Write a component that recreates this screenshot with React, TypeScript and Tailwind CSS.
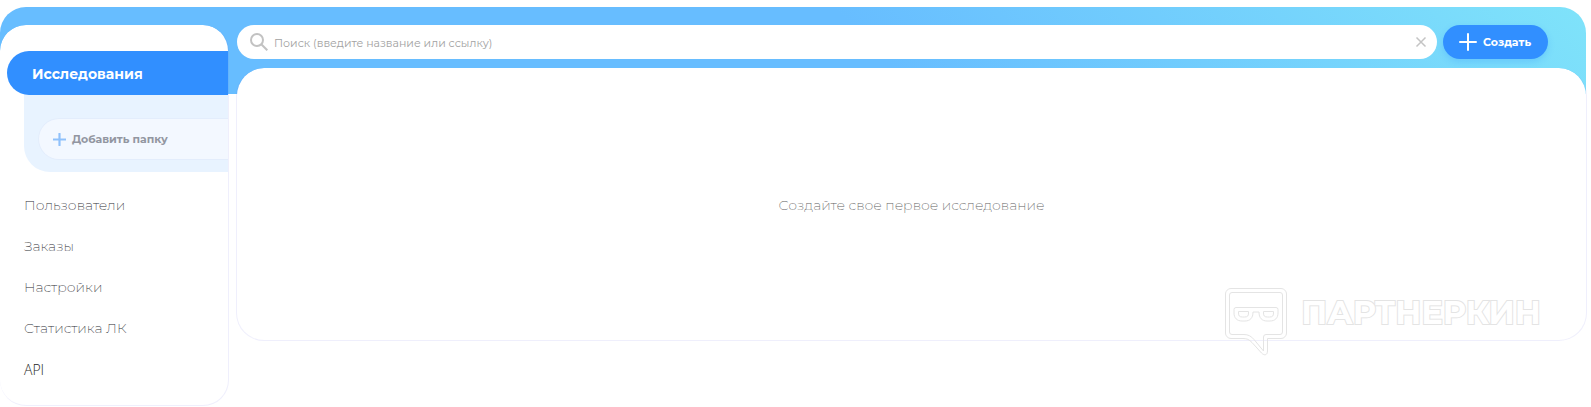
import { useState } from "react";

const NAV_ITEMS = [
  { label: "Пользователи", href: "#users" },
  { label: "Заказы", href: "#orders" },
  { label: "Настройки", href: "#settings" },
  { label: "Статистика ЛК", href: "#stats" },
];

function PlusIcon({ className }: { className?: string }) {
  return (
    <svg viewBox="0 0 18 18" className={className} fill="none" stroke="currentColor" strokeLinecap="round" aria-hidden="true">
      <path d="M9 1v16M1 9h16" />
    </svg>
  );
}

function Sidebar() {
  return (
    <aside className="w-[229px] shrink-0 rounded-[26px] border border-t-0 border-l-0 border-[#6464dc]/10 bg-white bg-clip-padding pt-[26px] pb-4">
      <a
        href="#research"
        className="ml-[7px] flex h-11 items-center rounded-l-[22px] bg-[#318fff] pt-0.5 pl-[25px] text-sm font-bold text-white"
      >
        Исследования
      </a>
      <div className="ml-6 rounded-bl-[26px] bg-[#e8f3ff] pt-[23px] pb-3 pl-3.5">
        <button
          type="button"
          className="flex h-[42px] w-full items-center gap-1.5 rounded-l-[21px] border border-r-0 border-[#e3edfc] bg-[#f3f8ff] pl-3.5 text-[11px] font-bold text-[#9296a1]"
        >
          <PlusIcon className="size-[13px] stroke-[3] text-[#8fc1fb]" />
          Добавить папку
        </button>
      </div>
      <nav className="flex flex-col pt-3 pl-6 text-sm font-extralight text-[#2c2d33]">
        {NAV_ITEMS.map((item) => (
          <a key={item.href} href={item.href} className="flex h-[41px] items-center">
            {item.label}
          </a>
        ))}
        <a href="#api" className="flex h-[41px] items-center pt-0.5 font-['Open_Sans',sans-serif] font-light text-[#1d1d25]">
          API
        </a>
      </nav>
    </aside>
  );
}

function Watermark() {
  return (
    <div className="pointer-events-none absolute right-[45px] -bottom-4 flex items-start gap-3.5">
      <svg width="62" height="68" viewBox="0 0 62 68" fill="none" stroke="#e4e4e4" aria-hidden="true">
        <path d="M6 .5h50a5.500 5.500 0 0 1 5.500 5.500v39a5.500 5.500 0 0 1-5.500 5.500H42.500V63c0 4-3 5-6 2L27 54.500c-3-3-5-4-9-4H6A5.500 5.500 0 0 1 .5 45V6A5.500 5.500 0 0 1 6 .5Z" />
        <path d="M7 4.500h48a2.500 2.500 0 0 1 2.500 2.500v37a2.500 2.500 0 0 1-2.500 2.500H41a2.500 2.500 0 0 0-2.500 2.500v14L29 51.500c-3-3.500-6-5-10-5H7A2.500 2.500 0 0 1 4.500 44V7A2.500 2.500 0 0 1 7 4.500Z" />
        <path d="M11 19.500h40a2 2 0 0 1 2 2V25c0 5-3 8-8 8h-3c-5 0-8-3-8-9h-6c0 6-3 9-8 9h-3c-5 0-8-3-8-8v-3.500a2 2 0 0 1 2-2Z" />
        <path d="M13.500 23.500h10V25c0 3-1 4-4 4h-2c-3 0-4-1-4-4ZM38.500 23.500h10V25c0 3-1 4-4 4h-2c-3 0-4-1-4-4Z" />
      </svg>
      <span className="pt-[9px] text-[32px] leading-8 font-bold text-white [-webkit-text-stroke:2px_#e4e4e4] [paint-order:stroke_fill]">
        ПАРТНЕРКИН
      </span>
    </div>
  );
}

export default function App() {
  const [query, setQuery] = useState("");

  return (
    <div className="grid bg-white pt-[7px] pr-1 font-['Montserrat','Inter',sans-serif]">
      {/* Header backdrop */}
      <div className="mr-px h-[87px] rounded-t-[26px] bg-[linear-gradient(45deg,#67bdff_55%,#7fe3fa_100%)] [grid-area:1/1]" />

      <div className="flex items-start gap-[7px] pt-[18px] [grid-area:1/1]">
        <Sidebar />

        <main className="min-w-0 flex-1">
          <div className="flex h-[34px] gap-1.5 pr-[39px] pl-px">
            <label className="flex min-w-0 flex-1 items-center rounded-full bg-white pr-2.5 pl-[13px]">
              <svg className="size-[18px] shrink-0 text-[#c2c2c2]" viewBox="0 0 18 18" fill="none" stroke="currentColor" strokeWidth="2" aria-hidden="true">
                <circle cx="7" cy="7" r="6" />
                <path d="m11.300 11.300 6 6" />
              </svg>
              <input
                type="text"
                aria-label="Поиск"
                value={query}
                onChange={(e) => setQuery(e.target.value)}
                placeholder="Поиск (введите название или ссылку)"
                className="ml-1.5 min-w-0 flex-1 pt-0.5 text-[11px] text-[#62646b] outline-none placeholder:text-[#a2a2a2]"
              />
              <button type="button" aria-label="Очистить" onClick={() => setQuery("")} className="text-[#c4c4c4]">
                <svg className="size-3" viewBox="0 0 12 12" fill="none" stroke="currentColor" strokeWidth="1.5" aria-hidden="true">
                  <path d="m1.500 1.500 9 9M10.500 1.500l-9 9" />
                </svg>
              </button>
            </label>
            <button
              type="button"
              className="flex w-[105px] items-center gap-1.5 rounded-full bg-[#318fff] pl-4 text-[11px] font-bold text-white shadow-[0_3px_6px_rgba(49,143,255,0.25)]"
            >
              <PlusIcon className="size-[18px] stroke-2" />
              Создать
            </button>
          </div>

          <section className="relative mt-[9px] flex h-[273px] items-center justify-center rounded-[28px] border border-t-0 border-[#6464dc]/10 bg-white bg-clip-padding">
            <p className="pt-0.5 text-sm font-extralight text-[#606060]">Создайте свое первое исследование</p>
            <Watermark />
          </section>
        </main>
      </div>
    </div>
  );
}
